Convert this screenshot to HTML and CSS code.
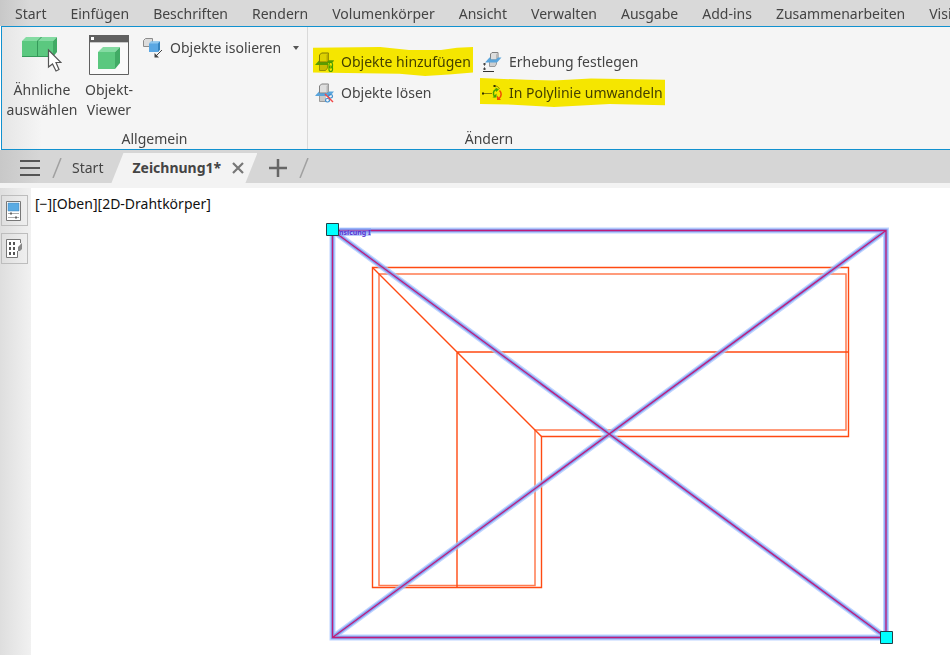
FILE: index.html
```html
<!DOCTYPE html>
<html lang="de">
<head>
<meta charset="utf-8">
<title>Zeichnung1</title>
<link rel="stylesheet" href="styles.css">
</head>
<body>
<svg class="defs" aria-hidden="true">
  <defs>
    <symbol id="section" viewBox="0 0 20 20">
      <path d="M5.500 12h8v4l-2 2.500h-6z" fill="#c8c8c8" stroke="#9a9a9a"/>
      <path d="M1 13l4-4.500h15L16 13z" fill="#5aa5dc"/>
      <path d="M5.500 3l2-2h7v7.500l-2 1.500h-7z" fill="#dedede" stroke="#808080"/>
      <path d="M12.500 3l2-2v7.500l-2 1.500z" fill="#b8b8b8"/>
      <path d="M4 10.500h12l-2 2H2z" fill="#5aa5dc"/>
    </symbol>
  </defs>
</svg>
<nav class="menu">
  <a href="#">Start</a><a href="#">Einfügen</a><a href="#">Beschriften</a><a href="#">Rendern</a><a href="#">Volumenkörper</a><a href="#">Ansicht</a><a href="#">Verwalten</a><a href="#">Ausgabe</a><a href="#">Add-ins</a><a href="#">Zusammenarbeiten</a><a href="#">Visi</a>
</nav>
<section class="ribbon">
  <div class="panel general">
    <div class="tools">
      <button class="big similar">
        <svg width="40" height="40" viewBox="0 0 40 40">
          <path d="M0 6l4-4h31l-4 4z" fill="#84dba2"/>
          <path d="M0 6h31v16H0z" fill="#5bc87f"/>
          <path d="M31 6l4-4v15l-4 5z" fill="#41ab65"/>
          <path d="M15.500 22V6l4-4M0 21.500h31" fill="none" stroke="#35995a"/>
          <path d="M26.500 15v17l4-3 3.500 7 3-1.500-3-7h5z" fill="#fff" stroke="#555" stroke-width="1.200"/>
        </svg>
        <span>Ähnliche<br>auswählen</span>
      </button>
      <button class="big viewer">
        <svg width="40" height="40" viewBox="0 0 40 40">
          <path d="M.5.5h39v39H.5z" fill="#fafafa" stroke="#606060"/>
          <path d="M0 0h40v7H0z" fill="#606060"/><path d="M2 2h3v3H2z" fill="#fff"/><path d="M1 7h38v1H1z" fill="#c8c8c8"/>
          <path d="M9 17l5-5h17l-5 5z" fill="#84dba2"/><path d="M9 17h17v17H9z" fill="#5bc87f"/><path d="M26 17l5-5v16l-5 6z" fill="#41ab65"/>
        </svg>
        <span>Objekt-<br>Viewer</span>
      </button>
      <button class="small isolate">
        <svg width="20" height="20" viewBox="0 0 20 20">
          <path d="M.5 2.500l2-2h7v6l-2 2h-7z" fill="#dcdcdc" stroke="#8c8c8c"/>
          <path d="M6 5.500L8 3.500h9v8l-2 2.500H6z" fill="#5aa7e3"/><path d="M6 5.500l2-2h9l-2 2z" fill="#91c8ee"/><path d="M15 5.500l2-2v8l-2 2.500z" fill="#3583be"/>
          <path d="M19 12l-6 6" stroke="#444"/><path d="M11.500 15v4.500H16z" fill="#444"/>
        </svg>
        <span>Objekte isolieren</span><i class="caret"></i>
      </button>
    </div>
    <h2>Allgemein</h2>
  </div>
  <div class="panel change">
    <div class="commands">
      <button class="small marked mark-a">
        <svg width="20" height="20" viewBox="0 0 20 20"><use href="#section"/><path d="M14 10h6v10h-6z" fill="#f5f5f5"/><path d="M20 8.500L18 11h-4V8.500z" fill="#5aa5dc"/><rect x="15" y="10.500" width="3.500" height="5.500" rx="1.700" fill="none" stroke="#45a858" stroke-width="1.200"/><rect x="15" y="14" width="3.500" height="5.500" rx="1.700" fill="none" stroke="#45a858" stroke-width="1.200"/></svg>
        <span>Objekte hinzufügen</span>
      </button>
      <button class="small">
        <svg width="20" height="20" viewBox="0 0 20 20"><path d="M7.500 8h7v4l-1.500 2.500H7.500z" fill="#cfcfcf" stroke="#9a9a9a"/><path d="M8.500 2l1.500-1.500h6V6l-2 2H8.500z" fill="#dedede" stroke="#808080"/><path d="M14 2.500l2-2V6l-2 2z" fill="#b8b8b8"/><path d="M3 10.500l4.500-5h1v2H14l2-2h3.500l-4.500 5z" fill="#5aa5dc"/><path d="M2.500 12v6" stroke="#888" stroke-dasharray="2 1"/><path d="M1 19.500h11" stroke="#333"/><path d="M1.500 11h2v2h-2zM1.500 16h2v2h-2z" fill="#444"/></svg>
        <span>Erhebung festlegen</span>
      </button>
      <button class="small">
        <svg width="20" height="20" viewBox="0 0 20 20"><use href="#section"/><path d="M12 13h8v7h-8z" fill="#f5f5f5"/><rect x="14.500" y="11.500" width="4" height="3.500" rx="1.700" fill="none" stroke="#3f8fd0" stroke-width="1.200"/><rect x="11.500" y="15.500" width="4" height="3.500" rx="1.700" fill="none" stroke="#3f8fd0" stroke-width="1.200"/><path d="M11 11l8 8" stroke="#f24848" stroke-width="1.400"/></svg>
        <span>Objekte lösen</span>
      </button>
      <button class="small marked mark-b">
        <svg width="20" height="20" viewBox="0 0 20 20"><path d="M1 10.500h9M12.500 3c3 0 4 1 5 3" stroke="#888" fill="none"/><path d="M0 9.500h2v2H0zM11.500 2h2v2h-2z" fill="#333"/><path d="M14 6.500c-3 1-3.500 5-1 7.500" fill="none" stroke="#48ad51" stroke-width="1.500"/><path d="M13.500 4.500l3.500 2-3 2.500z" fill="#48ad51"/><path d="M10.500 14.500h4v-4z" fill="#48ad51"/><path d="M17.500 7.500c2.500 2.500 2 6-.5 8" fill="none" stroke="#f0522c" stroke-width="1.500"/><path d="M15 12.500v4.500h4z" fill="#f0522c"/></svg>
        <span>In Polylinie umwandeln</span>
      </button>
    </div>
    <h2>Ändern</h2>
  </div>
</section>
<div class="files">
  <button class="burger" aria-label="Menü"><svg width="20" height="16" viewBox="0 0 20 16"><path d="M0 1h20M0 8h20M0 15h20" stroke="#555" stroke-width="2"/></svg></button>
  <svg class="slash" width="12" height="20" viewBox="0 0 12 20"><path d="M2 20l8-20" stroke="#a0a0a0" stroke-width="1.500"/></svg>
  <a class="file" href="#">Start</a>
  <div class="file active"><a href="#">Zeichnung1*</a><button aria-label="Schließen"><svg width="12" height="12" viewBox="0 0 12 12"><path d="M1 1l10 10M11 1L1 11" stroke="#777" stroke-width="2.200"/></svg></button></div>
  <button class="plus" aria-label="Neue Zeichnung"><svg width="18" height="18" viewBox="0 0 18 18"><path d="M0 9h18M9 0v18" stroke="#666" stroke-width="2.500"/></svg></button>
  <svg class="slash" width="12" height="20" viewBox="0 0 12 20"><path d="M2 20l8-20" stroke="#a0a0a0" stroke-width="1.500"/></svg>
</div>
<main class="work">
  <aside class="side">
    <button aria-label="Eigenschaften"><svg width="16" height="22" viewBox="0 0 16 22"><path d="M.5 1.500h14v19H.5z" fill="#fff" stroke="#777"/><path d="M2 3h11v8H2z" fill="#5aabe3" stroke="#4687b5" stroke-width=".5"/><path d="M2 13.500h11M2 17.500h11" stroke="#aaa"/><path d="M4 12.500h2v2H4zM9 16.500h2v2H9z" fill="#666"/></svg></button>
    <button aria-label="Werkzeuge"><svg width="16" height="22" viewBox="0 0 16 22"><path d="M14.500 5V1.500H.5v18h11V15" fill="#fff" stroke="#777"/><path d="M3 4h2v3H3zM7 4h2v3H7zM3 9h2v3H3zM7 9h2v3H7zM3 14h2v3H3zM7 14h2v3H7z" fill="#555"/><path d="M16 5v6l-2 2h-2V9z" fill="#888"/><path d="M11.500 13v6" stroke="#777"/></svg></button>
  </aside>
  <div class="canvas">
    <p class="view">[−][Oben][2D-Drahtkörper]</p>
    <svg class="drawing">
      <g transform="translate(-31 -188)" fill="none">
        <g stroke="#ff4a12">
          <path d="M372.500 267.500H848.500V436.500H541.500V587.500H372.500z" stroke-width="1.400"/>
          <path d="M379 274H846V430H535V585.500H379z" stroke="#ff7b50" stroke-width="1.500"/>
          <path d="M372.500 267.500L541.500 436.500M457 587V352H848" stroke-width="1.400"/>
        </g>
        <path d="M332.500 230.500H886V637.500H332.500zL886 637.500M886 230.500L332.500 637.500" stroke="#a9c6ff" stroke-width="6" opacity=".75"/>
        <path d="M332.500 230.500H886V637.500H332.500zL886 637.500M886 230.500L332.500 637.500" stroke="#7096f0" stroke-width="3.500" opacity=".75"/>
        <path d="M332.500 230.500H886V637.500H332.500zL886 637.500M886 230.500L332.500 637.500" stroke="#c01c78" stroke-width="1.300"/>
        <path d="M340 232h31" stroke="#7a9cf5" stroke-width="8" opacity=".5"/>
        <text class="tag" x="339" y="235">nsicung I</text>
        <path d="M326.500 223.500h12v12h-12zM880.500 631.500h12v12h-12z" fill="#0ff" stroke="#204048"/>
      </g>
    </svg>
  </div>
</main>
</body>
</html>
```
FILE: styles.css
```css
* { box-sizing: border-box; }
html, body { height: 100%; }
body {
  margin: 0;
  display: flex;
  flex-direction: column;
  overflow: hidden;
  background: #fff;
  color: #444;
  font: 14px/20px "Noto Sans", "Open Sans", sans-serif;
}
button { margin: 0; padding: 0; border: 0; background: none; color: inherit; font: inherit; }
a { color: inherit; text-decoration: none; }
svg { display: block; flex: none; }
.defs { position: absolute; width: 0; height: 0; }

.menu {
  display: flex;
  gap: 24px;
  height: 26px;
  padding: 4px 0 0 15px;
  overflow: hidden;
  background: linear-gradient(90deg, #c8c8c8, #d9d9d9 30px);
  white-space: nowrap;
}

.ribbon {
  display: flex;
  height: 124px;
  margin-left: 1px;
  border: 1px solid #1191cf;
  border-right: 0;
  background: linear-gradient(90deg, #e6e6e6, #f5f5f5 40px);
  white-space: nowrap;
}
.panel { display: flex; flex-direction: column; }
.panel h2 { margin: auto 0 0; font: inherit; text-align: center; }
.general { width: 306px; border-right: 1px solid #d9d9d9; }
.tools { display: flex; align-items: flex-start; padding: 8px 0 0; }
.big { display: flex; flex-direction: column; align-items: center; gap: 5px; }
.similar { width: 80px; }
.viewer { width: 54px; }
.small { position: relative; display: flex; align-items: center; gap: 7px; height: 26px; text-align: left; }
.isolate { margin-left: 7px; }
.caret { border: 3px solid transparent; border-top: 4px solid #555; border-bottom: 0; margin-left: 5px; }
.change { width: 362px; }
.commands {
  display: grid;
  grid-template-columns: 168px auto;
  row-gap: 5px;
  padding: 22px 0 0 6px;
}
.marked::after {
  content: "";
  position: absolute;
  inset: -2px 9px -1px -1px;
  background: #fff000;
  mix-blend-mode: multiply;
  clip-path: polygon(0 3%, 42% 0, 60% 10%, 80% 10%, 90% 3%, 100% 0, 100% 88%, 85% 95%, 70% 100%, 54% 92%, 0 88%);
}
.mark-b::after {
  right: auto;
  left: -2px;
  width: 185px;
  clip-path: polygon(0 0, 25% 6%, 40% 9%, 60% 2%, 100% 6%, 100% 94%, 70% 90%, 40% 100%, 18% 92%, 0 90%);
}

.files {
  display: flex;
  align-items: center;
  height: 33px;
  padding: 3px 0 0 20px;
  background: linear-gradient(90deg, #c8c8c8, #d6d6d6 40px);
}
.burger { margin-right: 11px; }
.file { padding: 0 8px 0 9px; }
.active {
  display: flex;
  align-items: center;
  gap: 11px;
  height: 30px;
  width: 146px;
  padding: 0 0 0 21px;
  background: #f3f3f3;
  clip-path: polygon(12px 0, 100% 0, calc(100% - 12px) 100%, 0 100%);
  font-weight: 700;
}
.plus { margin: 0 11px 0 12px; }

.work { display: flex; flex: 1; border-top: 5px solid #f3f3f3; }
.side {
  display: flex;
  flex-direction: column;
  gap: 7px;
  width: 31px;
  padding: 7px 3px 0 1px;
  background: linear-gradient(90deg, #dedede, #f1f1f1);
}
.side button {
  display: grid;
  place-items: center;
  height: 31px;
  padding-right: 2px;
  border: 1px solid #bdbdbd;
}
.canvas { position: relative; flex: 1; background: #fff; }
.view { margin: 6px 0 0 4px; color: #111; }
.drawing { position: absolute; inset: 0; width: 100%; height: 100%; }
.tag { fill: #5b35d0; font-size: 7px; font-weight: 700; }
```
